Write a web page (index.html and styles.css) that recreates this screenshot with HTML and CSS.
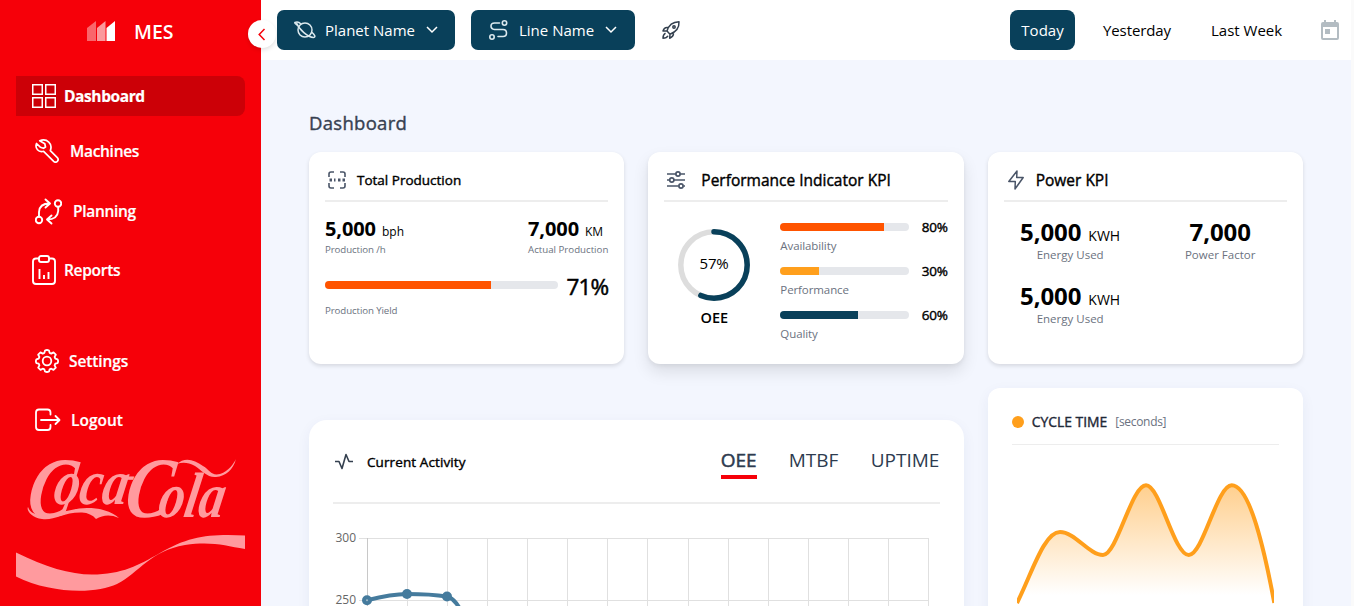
FILE: index.html
```html
<!DOCTYPE html>
<html lang="en">
<head>
<meta charset="utf-8">
<title>MES Dashboard</title>
<link rel="stylesheet" href="styles.css">
</head>
<body>
<div class="app">
  <aside class="sidebar">
    <div class="brand">
      <svg width="28" height="20" viewBox="0 0 28 20" fill="#fff"><path opacity=".4" d="M0 7 9 0v20H0z"/><path opacity=".6" d="M10 7 18.5 0v20H10z"/><path d="M19.5 7 28 0v20h-8.500z"/></svg>
      <span>MES</span>
    </div>
    <button class="collapse" aria-label="Collapse"><svg width="8" height="13" viewBox="0 0 8 13" fill="none" stroke="#f60009" stroke-width="1.5"><path d="M6.500 1 1.200 6.500l5.300 5.500"/></svg></button>
    <nav class="nav">
      <a class="item active"><svg width="24" height="24" viewBox="0 0 24 24" fill="none" stroke="#fff" stroke-width="1.500"><path d="M.75.75h9.500v9.500H.75zM13.750.75h9.500v9.500h-9.500zM.75 13.750h9.500v9.500H.75zM13.750 13.750h9.500v9.500h-9.500z"/></svg><span>Dashboard</span></a>
      <a class="item machines"><svg width="24" height="24" viewBox="0 0 24 24" fill="none" stroke="#fff" stroke-width="1.700" stroke-linejoin="round"><path d="M4.700 1.700 9.800 4.800 10.500 8 8.500 9.300 5.300 8.200 1.500 4.500C-.3 9.500 3.500 13.700 8.600 12.300L18.700 22.300Q20.500 24 22.300 22.300 24 20.500 22.300 18.700L15.300 11.700C18 4.500 12-.9 4.700 1.700Z"/></svg><span>Machines</span></a>
      <a class="item planning"><svg width="27" height="27" viewBox="0 0 27 27" fill="none" stroke="#fff" stroke-width="1.900" stroke-linecap="round" stroke-linejoin="round"><circle cx="4" cy="22" r="3.200"/><circle cx="23" cy="5.500" r="3.200"/><path d="M4 18.500v-4.500Q4.500 5.500 14.500 5.500M10.500 1.500l4.500 4-4.500 4M23.200 9v4Q22.500 21.500 12 21.500M16.500 17.500l-4.500 4 4.500 4"/></svg><span>Planning</span></a>
      <a class="item reports"><svg width="24" height="30" viewBox="0 0 24 30" fill="none" stroke="#fff" stroke-width="1.900"><path d="M7 3.500H4Q1 3.500 1 6.500v19.500q0 3 3 3h16q3 0 3-3V6.500q0-3-3-3h-3"/><rect x="7" y="1" width="10" height="6" rx="2"/><path d="M7.500 14v10M12 20v4M16.500 17v7"/></svg><span>Reports</span></a>
      <a class="item settings"><svg width="24" height="24" viewBox="0 0 24 24" fill="none" stroke="#fff" stroke-width="1.800" stroke-linejoin="round"><circle cx="12" cy="12" r="4.300"/><path d="M10 1.500q2-1 4 0l.6 2.400 1.700.7 2.200-1.200 2.300 2.300-1.200 2.200.7 1.700 2.300.7q1 1.900 0 3.800l-2.300.6-.7 1.700 1.200 2.200-2.300 2.300-2.200-1.200-1.700.7-.6 2.100q-2 1-4 0l-.6-2.100-1.700-.7-2.200 1.200-2.300-2.300 1.200-2.200-.7-1.700-2.300-.6q-1-1.900 0-3.800l2.300-.7.7-1.700-1.200-2.200 2.300-2.300 2.200 1.200 1.700-.7z"/></svg><span>Settings</span></a>
      <a class="item logout"><svg width="26" height="24" viewBox="0 0 26 24" fill="none" stroke="#fff" stroke-width="1.800" stroke-linecap="round" stroke-linejoin="round"><path d="M15.500 6.500V4.500q0-3-3-3H4q-3 0-3 3v14.500q0 3 3 3h8.500q3 0 3-3v-2M6 12h18M20.500 8l4 4-4 4"/></svg><span>Logout</span></a>
    </nav>
    <svg class="cola" width="229" height="136" viewBox="16 456 229 136" fill="#ff9a9e">
      <text class="script" transform="translate(27 517) skewX(-10) scale(.8 1)"><tspan class="cap" x="-3" y="0">C</tspan><tspan x="28" y="-13">oca</tspan><tspan class="hyphen" x="114" y="-30">-</tspan><tspan class="cap" x="119" y="0">C</tspan><tspan x="162" y="0">ola</tspan></text>
      <path d="M28 507C34 524 66 508 87 508C100 508 111 511 119 518C110 514 103 515 96 519Q91 513 82 512.500C63 512 54 521 42 519C32 518 26 510 28 507Z"/>
      <path d="M177 464C184 457 194 459 203 466C210 470 211 476 220 474C229 471 234 463 236 459C233 470 226 476 216 477C208 478 201 470 195 466C188 462 182 462 177 464Z"/>
      <path d="M16 552.500C45 567 70 574.500 92 574.500C122 574.500 139 565 160 553C184 539 202 535 228 535L245 535.500V549C225 545.500 211 541 185 545C150 551 140 572 117 584C96 594 51 594 16 576.500Z"/>
    </svg>
  </aside>

  <div class="page">
    <header class="topbar">
      <button class="select planet"><svg width="22" height="18" viewBox="0 0 22 18" fill="none" stroke="#dce9ee" stroke-width="1.500"><circle cx="11" cy="9" r="7"/><path d="M5 5.500Q0 2 1 1.500 4 0 7 3M2.500 2C5 8.500 14 16.500 19.500 16.500 22.500 16 20 13 17.500 11"/></svg><span>Planet Name</span><svg width="12" height="8" viewBox="0 0 12 8" fill="none" stroke="#fff" stroke-width="1.500"><path d="m1 1 5 5 5-5"/></svg></button>
      <button class="select line"><svg width="20" height="20" viewBox="0 0 20 20" fill="none" stroke="#dce9ee" stroke-width="1.600"><circle cx="15.500" cy="3" r="2.200"/><circle cx="3" cy="17" r="2.200"/><path d="M10.500 3H5.500Q2 3 2 6T5.500 9.500h8.500q3.500 0 3.500 3.500T14 16.500H9" stroke-linecap="round"/></svg><span>Line Name</span><svg width="12" height="8" viewBox="0 0 12 8" fill="none" stroke="#fff" stroke-width="1.500"><path d="m1 1 5 5 5-5"/></svg></button>
      <svg class="rocket" width="20" height="20" viewBox="0 0 20 20" fill="none" stroke="#34404f" stroke-width="1.500" stroke-linejoin="round"><path d="M6 11Q8.500 2 18 1.700 18.500 10.500 9 14.200ZM7 7.500Q3.300 6.800 2 11L6 11M12.500 12.500q.3 4-3.800 5.700L9 14.200M4.500 13.200Q2 14.500 2 18.200 5.800 18.200 7 15.700"/><circle cx="13" cy="7" r="1.200"/></svg>
      <div class="range"><span class="today">Today</span><span class="yesterday">Yesterday</span><span class="week">Last Week</span>
        <svg width="18" height="20" viewBox="0 0 18 20"><path fill="#b3bcc2" fill-rule="evenodd" d="M3 0h2v2h8V0h2v2h1q2 0 2 2v14q0 2-2 2H2q-2 0-2-2V4q0-2 2-2h1zM2 7v11h14V7zM4 9h5v5H4z"/></svg>
      </div>
    </header>

    <main class="main">
      <h1>Dashboard</h1>
      <div class="grid">
        <section class="card production">
          <div class="head"><svg width="18" height="18" viewBox="0 0 18 18" fill="none" stroke="#4a5568" stroke-width="1.600"><path d="M1 6V3q0-2 2-2h3M12 1h3q2 0 2 2v3M17 12v3q0 2-2 2h-3M6 17H3q-2 0-2-2v-3"/><path stroke-width="3" d="M1.500 9H4M6 9h1.500M10 9h2.500M14.500 9H17"/></svg><h2>Total Production</h2></div>
          <div class="stats">
            <div><div class="num"><b>5,000</b><span>bph</span></div><small>Production /h</small></div>
            <div><div class="num"><b>7,000</b><span>KM</span></div><small class="actual">Actual Production</small></div>
          </div>
          <div class="yield"><div class="bar"><i class="orange" style="width:71.3%"></i></div><strong>71%</strong></div>
          <small class="yieldlabel">Production Yield</small>
        </section>

        <section class="card kpi">
          <div class="head"><svg width="18" height="18" viewBox="0 0 18 18" fill="none" stroke="#4a5568" stroke-width="1.700"><path d="M0 3h8.800M13.200 3H18M0 9h2.500M7 9h11M0 15h11.500M16.500 15H18"/><circle cx="11" cy="3" r="2.100"/><circle cx="4.800" cy="9" r="2.100"/><circle cx="14" cy="15" r="2.100"/></svg><h2>Performance Indicator KPI</h2></div>
          <div class="kpibody">
            <div class="gauge">
              <svg width="72" height="72" viewBox="0 0 72 72"><circle cx="36" cy="36" r="33.200" fill="none" stroke="#ddd" stroke-width="5.500"/><circle cx="36" cy="36" r="33.200" fill="none" stroke="#09405a" stroke-width="5.500" stroke-linecap="round" pathLength="100" stroke-dasharray="56.500 100" transform="rotate(-90 36 36)"/><text x="36" y="40" text-anchor="middle">57%</text></svg>
              <strong>OEE</strong>
            </div>
            <div class="bars">
              <div class="row"><div class="bar"><i class="orange" style="width:80%"></i></div><b>80%</b></div><small>Availability</small>
              <div class="row"><div class="bar"><i class="amber" style="width:30%"></i></div><b>30%</b></div><small>Performance</small>
              <div class="row"><div class="bar"><i class="navy" style="width:60%"></i></div><b>60%</b></div><small>Quality</small>
            </div>
          </div>
        </section>

        <section class="card power">
          <div class="head"><svg width="16" height="20" viewBox="0 0 16 20" fill="none" stroke="#4a5568" stroke-width="1.500" stroke-linejoin="round"><path d="M9 1 .8 11.500h6.500L7 19l8.200-11.500H8.700z"/></svg><h2>Power KPI</h2></div>
          <div class="powergrid">
            <div><div class="num"><b>5,000</b><span>KWH</span></div><small>Energy Used</small></div>
            <div><div class="num"><b>7,000</b></div><small>Power Factor</small></div>
            <div><div class="num"><b>5,000</b><span>KWH</span></div><small>Energy Used</small></div>
          </div>
        </section>

        <section class="activity">
          <div class="acthead"><svg width="18" height="17" viewBox="0 0 18 17" fill="none" stroke="#34404f" stroke-width="1.600" stroke-linejoin="round"><path d="M0 8.500h4l3 7 4-14 3 7h4"/></svg><h2>Current Activity</h2>
            <div class="tabs"><span class="on">OEE</span><span class="mtbf">MTBF</span><span class="uptime">UPTIME</span></div></div>
          <svg class="linechart" width="607" height="102" viewBox="333 504 607 102">
            <g stroke="#e0e0e0" stroke-width="1"><path d="M359 538.500H929M359 600.500H929M407.500 538v68M447.500 538v68M487.500 538v68M527.500 538v68M567.500 538v68M607.500 538v68M647.500 538v68M688.500 538v68M728.500 538v68M768.500 538v68M808.500 538v68M848.500 538v68M888.500 538v68M928.500 538v68" fill="none"/><path d="M367.500 538v68" stroke="#c8c8c8"/></g>
            <text x="356" y="542" text-anchor="end">300</text><text x="356" y="604" text-anchor="end">250</text>
            <path d="M367 600.200C380 597 394 594 407 594C420 594 434 594.500 447 596.500C455 599 459 607 465 617" fill="none" stroke="#457b9d" stroke-width="4"/>
            <g fill="#457b9d"><circle cx="367" cy="600.300" r="5"/><circle cx="407" cy="594" r="5"/><circle cx="447" cy="596.500" r="5"/></g><circle cx="367" cy="600.300" r="1" fill="#a5bdca"/>
          </svg>
        </section>

        <section class="cycle">
          <div class="cyclehead"><i></i><h2>CYCLE TIME</h2><span>[seconds]</span></div>
          <svg width="267" height="161" viewBox="0 0 267 161">
            <defs><linearGradient id="fade" gradientUnits="userSpaceOnUse" x1="0" y1="40" x2="0" y2="150"><stop stop-color="#ff9f1c" stop-opacity=".5"/><stop offset="1" stop-color="#ff9f1c" stop-opacity="0"/></linearGradient><clipPath id="plot"><path d="M5 0h257v161H5z"/></clipPath></defs>
            <g clip-path="url(#plot)"><path fill="url(#fade)" d="M5.700 156.700C20 128 32 87 48 87C63 87 77 110 91 110C105 110 119.500 40.300 134 40.300C148 40.300 162 110 176.800 110C191 110 205 40.300 219.700 40.300C236 40.300 250 92 262 156.700Z"/><path fill="none" stroke="#ff9f1c" stroke-width="4" d="M5 158C20 128 32 87 48 87C63 87 77 110 91 110C105 110 119.500 40.300 134 40.300C148 40.300 162 110 176.800 110C191 110 205 40.300 219.700 40.300C236 40.300 250 92 262.300 158"/></g>
          </svg>
        </section>
      </div>
    </main>
  </div>
</div>
</body>
</html>
```

FILE: styles.css
```css
* { box-sizing: border-box; }
body { margin: 0; height: 606px; overflow: hidden; background: #fafafa; font-family: "Open Sans", "Noto Sans", sans-serif; font-size: 15px; color: #000; }
h1, h2 { margin: 0; white-space: nowrap; }
svg { flex: none; display: block; }
button { border: 0; font: inherit; padding: 0; }
span, b, small, strong { white-space: nowrap; }

.app { display: flex; width: 1351px; height: 606px; overflow: hidden; }
.sidebar { position: relative; z-index: 2; width: 261px; flex: none; background: #f60009; color: #fff; }
.brand { display: flex; align-items: center; height: 62px; padding-left: 87px; gap: 19px; font-size: 19.5px; font-weight: 600; }
.collapse { position: absolute; right: -15px; top: 20px; width: 28px; height: 28px; border-radius: 50%; background: #fff; display: flex; align-items: center; justify-content: center; box-shadow: 0 2px 4px rgba(0,0,0,.12); }
.nav { display: flex; flex-direction: column; padding: 14px 16px 0; }
.item { display: flex; align-items: center; height: 40px; padding-left: 19px; gap: 11px; font-weight: 600; font-size: 15.5px; letter-spacing: -0.3px; }
.item span { -webkit-text-stroke: 0.2px #fff; }
.active { padding-left: 16px; gap: 8px; background: #cc0007; border-radius: 0 8px 8px 0; font-weight: 700; letter-spacing: -0.4px; }
.machines { margin-top: 15px; }
.planning { margin-top: 20px; }
.reports { margin-top: 19px; padding-left: 16px; gap: 8px; }
.settings { margin-top: 51px; gap: 10px; letter-spacing: -0.1px; }
.logout { margin-top: 19px; gap: 10px; letter-spacing: 0; }
.cola { margin: 16px 0 0 16px; }
.script { font: italic 700 64px "Liberation Serif", serif; }
.cap { font-size: 86px; }
.hyphen { font-size: 38px; }

.page { flex: 1; min-width: 0; background: #f3f6fe; }
.topbar { display: flex; align-items: center; height: 60px; background: #fff; padding: 0 12px 0 16px; }
.select { display: flex; align-items: center; height: 40px; background: #09405a; color: #fff; border-radius: 7px; }
.planet { width: 178px; padding-left: 17px; gap: 9px; margin-right: 16px; }
.planet span { width: 92px; text-align: left; }
.line { width: 164px; padding-left: 18px; gap: 10px; }
.line span { width: 76px; text-align: left; }
.rocket { margin-left: 26px; }
.range { display: flex; align-items: center; margin-left: auto; }
.today { width: 65px; height: 40px; line-height: 40px; border-radius: 8px; background: #09405a; color: #fff; text-align: center; }
.yesterday { width: 68px; margin-left: 28px; letter-spacing: -0.1px; }
.week { width: 72px; margin: 0 38px 0 40px; }

.main { padding: 48px 48px 0; }
h1 { height: 44px; line-height: 29px; font-size: 18.5px; font-weight: 400; letter-spacing: .3px; color: #374151; -webkit-text-stroke: 0.4px #374151; }
.grid { display: grid; grid-template-columns: repeat(3, minmax(0, 1fr)); grid-template-rows: 212px 330px; gap: 24px; }
.card { background: #fff; border-radius: 12px; padding: 0 16px; box-shadow: 0 2px 4px rgba(0,0,0,.12); }
.kpi { box-shadow: 0 8px 16px rgba(0,0,0,.1), 0 2px 4px rgba(0,0,0,.06); }
.head { display: flex; align-items: center; height: 50px; padding: 7px 0 0 3px; border-bottom: 2px solid #ededed; gap: 11px; }
h2 { font-size: 15px; font-weight: 400; -webkit-text-stroke: 0.4px #000; }
.production h2 { font-size: 13.5px; }
.kpi .head { gap: 16px; }
.kpi h2 { font-size: 15.5px; }
.power .head { padding-left: 4px; gap: 12px; }
.power h2 { font-size: 15.5px; }
small { display: block; color: #6b7280; }
.stats { display: flex; justify-content: space-between; padding-top: 14px; }
.num { display: flex; align-items: baseline; gap: 6px; height: 26px; line-height: 26px; }
.num b { font-size: 20px; letter-spacing: -0.1px; }
.num span { font-size: 12px; }
.production small { font-size: 9.7px; line-height: 15px; letter-spacing: -0.1px; }
.stats .actual { letter-spacing: 0; }
.yield { display: flex; align-items: center; justify-content: space-between; height: 36px; margin-top: 12px; }
.bar { height: 8px; border-radius: 4px; overflow: hidden; background: #e5e7eb; }
.bar i { display: block; height: 100%; }
.orange { background: #ff5400; } .amber { background: #ff9f1c; } .navy { background: #09405a; }
.yield .bar { width: 233px; margin-bottom: 4px; }
.yield strong { font-size: 22.5px; font-weight: 400; letter-spacing: -0.8px; line-height: 30px; -webkit-text-stroke: 0.5px #000; }
.production .yieldlabel { margin-top: -2px; }
.kpibody { display: flex; padding-top: 14px; }
.gauge { width: 72px; margin: 13px 30px 0 14px; text-align: center; }
.gauge text { font-size: 15px; letter-spacing: -0.2px; }
.gauge strong { display: block; font-size: 14.5px; font-weight: 600; line-height: 20px; margin-top: 7px; }
.bars { flex: 1; }
.row { display: flex; align-items: center; justify-content: space-between; height: 22px; }
.row .bar { width: 129px; }
.row b { font-size: 13.5px; font-weight: 400; letter-spacing: -0.2px; -webkit-text-stroke: 0.4px #000; }
.bars small { font-size: 11.5px; height: 22px; line-height: 15px; letter-spacing: -0.1px; }
.powergrid { display: grid; grid-template-columns: 133px 167px; grid-auto-rows: 64px; padding-top: 14px; text-align: center; }
.power .num { justify-content: center; height: 31px; line-height: 31px; gap: 7px; }
.power .num b { font-size: 24px; }
.power .num span { font-size: 14px; }
.power small { font-size: 11.5px; line-height: 15px; }

.activity { grid-column: span 2; margin-top: 32px; background: #fff; border-radius: 18px; padding: 0 24px; box-shadow: 0 4px 14px rgba(20,50,120,.06); }
.acthead { display: flex; align-items: center; height: 84px; border-bottom: 2px solid #ededed; padding-left: 2px; gap: 14px; }
.acthead h2 { font-size: 13.5px; padding-top: 2px; letter-spacing: .1px; }
.tabs { display: flex; margin-left: auto; gap: 32px; font-size: 19px; color: #2d3b4f; padding-top: 3px; }
.tabs span { height: 32px; line-height: 26px; }
.on { width: 36px; border-bottom: 4px solid #f60009; -webkit-text-stroke: 0.5px #2d3b4f; }
.mtbf { width: 50px; } .uptime { width: 69px; }
.linechart text { font-size: 12px; fill: #666; }
.cycle { background: #fff; border-radius: 12px; padding: 0 24px; box-shadow: 0 4px 14px rgba(20,50,120,.06); }
.cyclehead { display: flex; align-items: center; height: 57px; padding-top: 11px; border-bottom: 1px solid #ededed; }
.cyclehead i { width: 12px; height: 12px; border-radius: 50%; background: #ff9f1c; margin-right: 8px; }
.cyclehead h2 { font-size: 13.9px; color: #1f2937; -webkit-text-stroke-color: #1f2937; }
.cyclehead span { font-size: 12px; color: #6b7280; margin-left: 8px; letter-spacing: -0.3px; }
```
